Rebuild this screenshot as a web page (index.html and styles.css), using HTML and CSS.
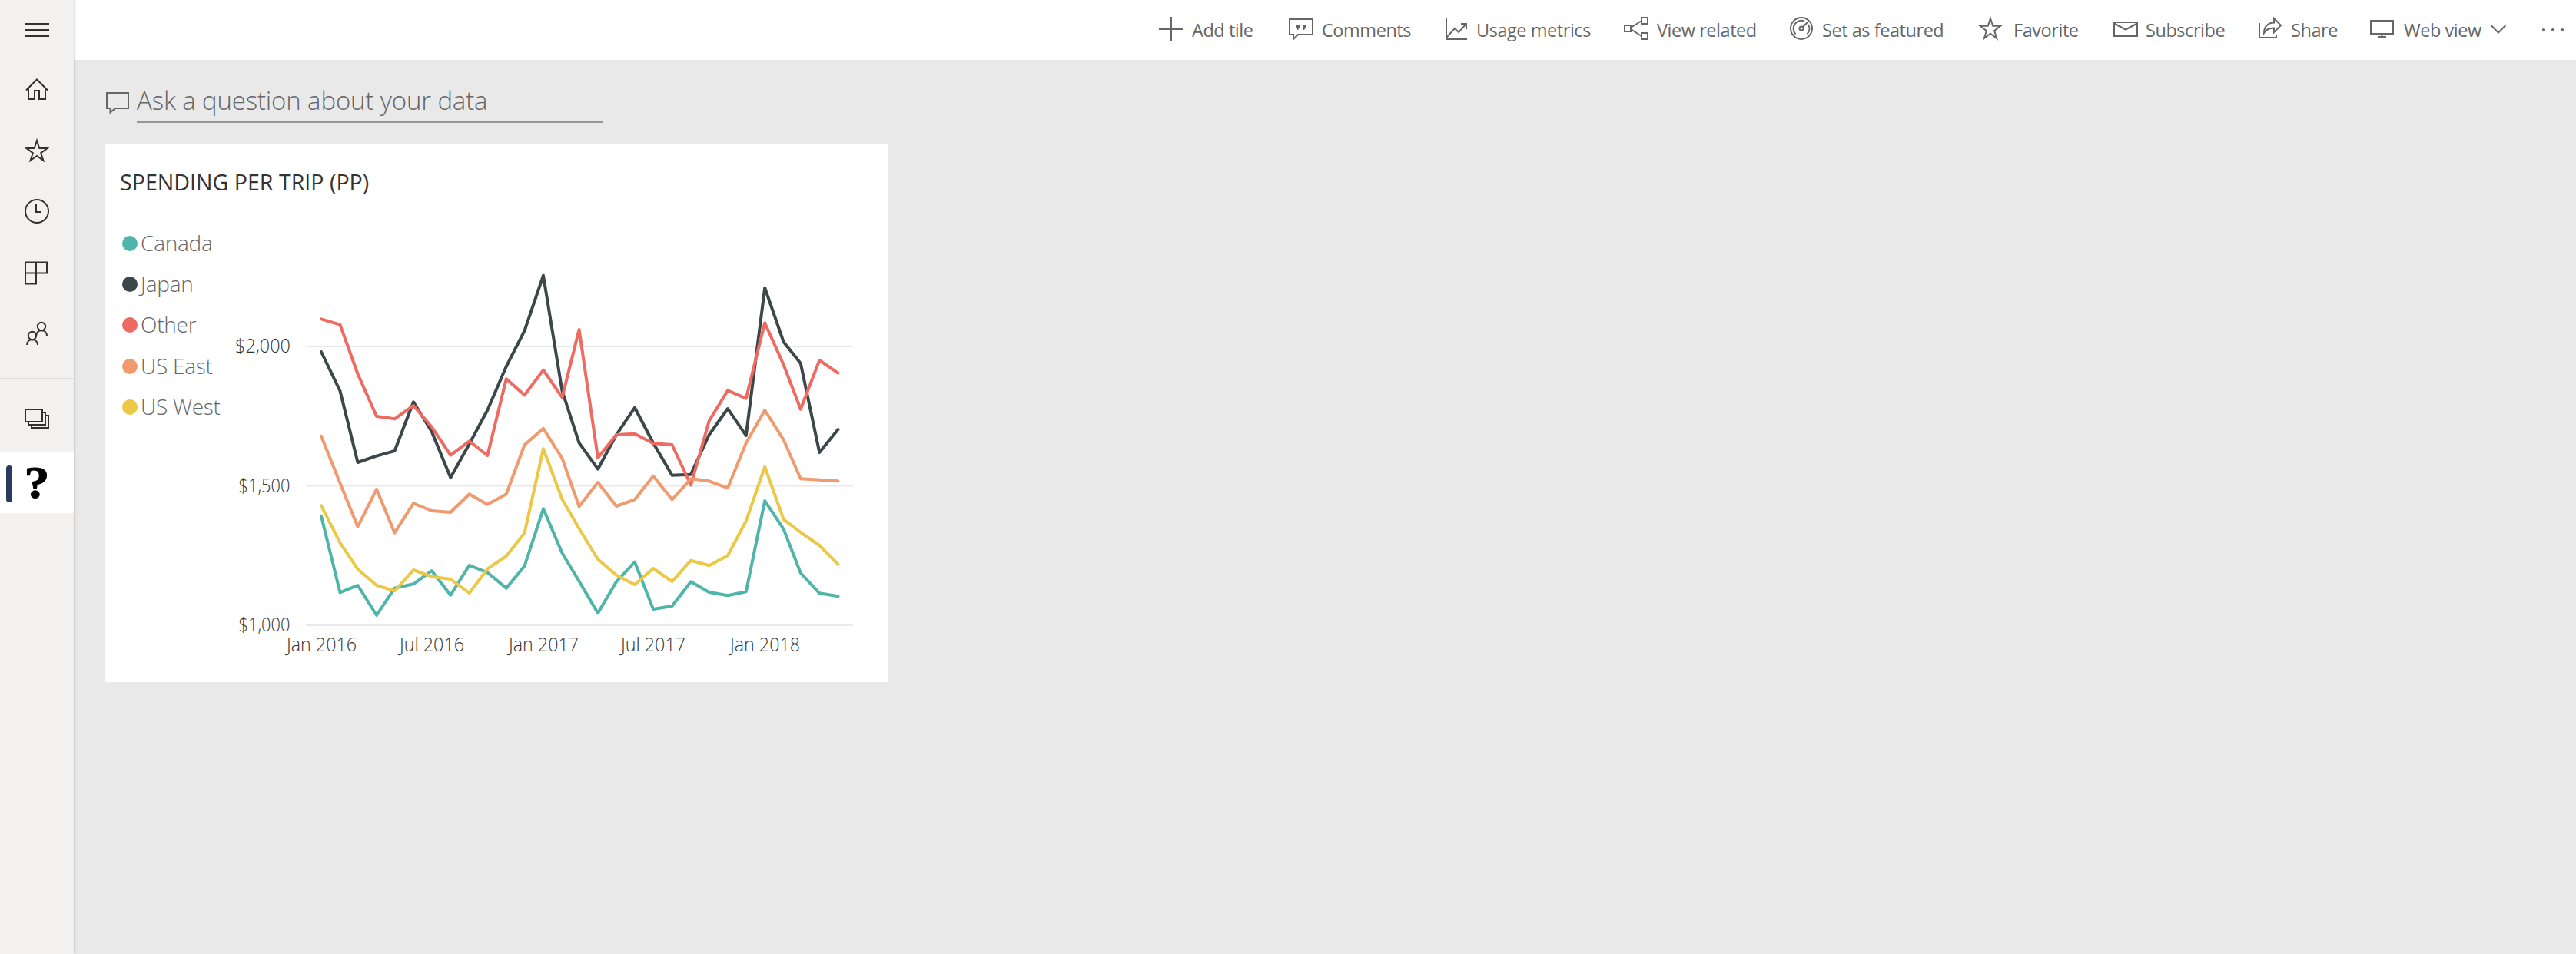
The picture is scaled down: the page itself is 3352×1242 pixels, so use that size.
FILE: index.html
```html
<!DOCTYPE html>
<html lang="en">
<head>
<meta charset="utf-8">
<title>Spending dashboard</title>
<link rel="stylesheet" href="styles.css">
</head>
<body>
<div class="app">
  <nav class="rail">
    <a class="rail-item menu"><svg width="32" height="18" viewBox="0 0 32 18"><path d="M0 1h32M0 9h32M0 17h32"/></svg></a>
    <a class="rail-item"><svg width="32" height="32" viewBox="0 0 32 32"><path d="M2 17.500L16 3.500 30 17.500M5 15v14h8V18h6v11h8V15"/></svg></a>
    <a class="rail-item"><svg width="32" height="32" viewBox="0 0 32 32"><path d="M16 3l3.200 10H29.500l-8.300 6.200 3.200 9.800L16 23l-8.400 6 3.200-9.800L2.500 13h10.300z"/></svg></a>
    <a class="rail-item"><svg width="32" height="32" viewBox="0 0 32 32"><circle cx="16" cy="16" r="15"/><path d="M15 6v11h7"/></svg></a>
    <a class="rail-item"><svg width="32" height="32" viewBox="0 0 32 32"><path d="M1 2.500h28v14H15v14H1zM15 2.500v14M1 16.500h14"/></svg></a>
    <a class="rail-item"><svg width="32" height="32" viewBox="0 0 32 32"><circle cx="22" cy="7" r="5.200"/><circle cx="10" cy="19" r="5.200"/><path d="M15 19c.5-4 3-6.800 7-6.800 4.500 0 7 3 7 6.800M3 31c0-4 2.500-6.800 7-6.800s7 2.800 7 6.800"/></svg></a>
    <span class="rail-divider"></span>
    <a class="rail-item stack"><svg width="32" height="26" viewBox="0 0 32 26"><path d="M1 1h22v16H1zM23 5h4v16H5v-4M27 9h4v16H9v-4"/></svg></a>
    <a class="rail-item current"><span class="marker"></span><span class="question">?</span></a>
  </nav>
  <div class="main">
    <header class="toolbar">
      <a class="action add"><svg width="34" height="34" viewBox="0 0 34 34"><path d="M1 17h32M17 1v32"/></svg><span>Add tile</span></a>
      <a class="action comments"><svg width="34" height="34" viewBox="0 0 34 34"><path d="M2 4h30v20H13l-6 6v-6H2z"/><path class="solid" d="M11 11h4v4l-2 3h-1v-2h-1zM19 11h4v4l-2 3h-1v-2h-1z"/></svg><span>Comments</span></a>
      <a class="action usage"><svg width="34" height="34" viewBox="0 0 34 34"><path d="M4 3v27h27M4 28l11-12 5 5L30 10M23 10h7v7"/></svg><span>Usage metrics</span></a>
      <a class="action related"><svg width="34" height="34" viewBox="0 0 34 34"><path d="M2 12h8v8H2zM24 2h8v8h-8zM24 22h8v8h-8zM10 15l14-9M10 17l14 9"/></svg><span>View related</span></a>
      <a class="action featured"><svg width="34" height="34" viewBox="0 0 34 34"><circle cx="17" cy="16" r="14"/><path d="M9.500 23.500A10.500 10.500 0 0 1 21 6.500M26 11a10.500 10.500 0 0 1-1.500 12.500M19 14l6-6"/><circle cx="17" cy="16" r="2.500"/></svg><span>Set as featured</span></a>
      <a class="action favorite"><svg width="34" height="34" viewBox="0 0 34 34"><path d="M17 3l3.200 9.800h10l-8.100 6.400L25.200 29 17 22.800 8.800 29l3.100-9.800-8.100-6.400h10z"/></svg><span>Favorite</span></a>
      <a class="action subscribe"><svg width="34" height="34" viewBox="0 0 34 34"><path d="M2 8h30v18H2zM2 9.500l15 8 15-8"/></svg><span>Subscribe</span></a>
      <a class="action share"><svg width="34" height="34" viewBox="0 0 34 34"><path d="M3 9v19h22v-4M22 3l9 9-9 9v-5.500c-6 0-10 1.500-13 6.500 0-8 5-13.500 13-13.500z"/></svg><span>Share</span></a>
      <a class="action webview"><svg width="34" height="34" viewBox="0 0 34 34"><path d="M2 6h29v17H2zM16.500 23v4M11 27h11"/></svg><span>Web view</span><svg class="chevron" width="22" height="14" viewBox="0 0 22 14"><path d="M1.500 2L11 11.500 20.500 2"/></svg></a>
      <a class="more"><svg width="30" height="6" viewBox="0 0 30 6"><circle class="solid" cx="3" cy="3" r="2.100"/><circle class="solid" cx="15" cy="3" r="2.100"/><circle class="solid" cx="27" cy="3" r="2.100"/></svg></a>
    </header>
    <main class="canvas">
      <div class="ask">
        <svg width="32" height="30" viewBox="0 0 32 30"><path d="M3 2h28v20H14l-6.500 5.500V22H3z"/></svg>
        <div class="ask-input"><span>Ask a question about your data</span></div>
      </div>
      <section class="tile">
        <h2>SPENDING PER TRIP (PP)</h2>
        <div class="tile-body">
          <ul class="legend">
            <li><i class="dot canada"></i><span>Canada</span></li>
            <li><i class="dot japan"></i><span>Japan</span></li>
            <li><i class="dot other"></i><span>Other</span></li>
            <li><i class="dot east"></i><span>US East</span></li>
            <li><i class="dot west"></i><span>US West</span></li>
          </ul>
          <svg class="chart" width="866" height="598" viewBox="290 290 866 598">
            <path class="grid" d="M398 451h712M398 632.500h712M398 814h712"/>
            <g class="axis">
              <text x="306" y="459" textLength="72" lengthAdjust="spacingAndGlyphs">$2,000</text>
              <text x="310.500" y="641" textLength="67" lengthAdjust="spacingAndGlyphs">$1,500</text>
              <text x="310.500" y="822" textLength="67" lengthAdjust="spacingAndGlyphs">$1,000</text>
              <text x="373" y="848" textLength="91" lengthAdjust="spacingAndGlyphs">Jan 2016</text>
              <text x="520" y="848" textLength="84" lengthAdjust="spacingAndGlyphs">Jul 2016</text>
              <text x="662" y="848" textLength="91" lengthAdjust="spacingAndGlyphs">Jan 2017</text>
              <text x="808" y="848" textLength="84" lengthAdjust="spacingAndGlyphs">Jul 2017</text>
              <text x="950" y="848" textLength="91" lengthAdjust="spacingAndGlyphs">Jan 2018</text>
            </g>
            <polyline class="line canada" points="418,671.700 442.500,771.300 465.500,762 490,801 513.500,765.700 538,760.300 561.700,743 586.300,774.700 610.700,736 634.300,745.300 658.800,765.700 682.500,737 707,662.300 731.500,720 753.600,756.700 778,798.300 802,757.300 826,731.700 850,793 874.500,789 899,757.300 922.700,771 947,775.300 970.800,770.300 995.200,652 1019.700,689 1041.800,746 1066.300,772.300 1090.500,776.300"/>
            <polyline class="line japan" points="418,458 442.500,509 465.500,602 490,593.700 513.500,587 538,523.300 561.700,561.700 586.300,621.700 610.700,578 634.300,534 658.800,477 682.500,430.700 707,358.700 731.500,509 753.600,576.700 778,610.700 802,566 826,530.700 850,576.700 874.500,618.700 899,617.700 922.700,566 947,532 970.800,567 995.200,374.700 1019.700,445.300 1041.800,473 1066.300,589 1090.500,559"/>
            <polyline class="line other" points="418,415.300 442.500,422.700 465.500,486.700 490,542 513.500,545.300 538,528 561.700,555.700 586.300,592.700 610.700,574.300 634.300,593 658.800,493.300 682.500,514.300 707,481.700 731.500,517.300 753.600,429 778,596 802,566 826,564.700 850,577.300 874.500,579 899,631.500 922.700,548 947,508.300 970.800,518.700 995.200,420.300 1019.700,475 1041.800,532.700 1066.300,469 1090.500,485.700"/>
            <polyline class="line east" points="418,567.700 442.500,629 465.500,685.700 490,637 513.500,693.700 538,655.300 561.700,665 586.300,667 610.700,643.300 634.300,656.700 658.800,643.300 682.500,579.300 707,557.700 731.500,596.700 753.600,659.300 778,628 802,659 826,650.300 850,619.700 874.500,650.300 899,623.300 922.700,626.300 947,635.300 970.800,576.700 995.200,534 1019.700,572.700 1041.800,623.300 1066.300,624.700 1090.500,626.300"/>
            <polyline class="line west" points="418,658.300 442.500,706.700 465.500,741 490,762 513.500,769.300 538,742 561.700,750.700 586.300,754 610.700,772 634.300,740.700 658.800,724 682.500,694 707,584.300 731.500,650 753.600,688.300 778,728 802,748.700 826,761 850,740 874.500,757 899,729.700 922.700,736.300 947,723.300 970.800,678.300 995.200,607.700 1019.700,676.300 1041.800,693 1066.300,710 1090.500,734.700"/>
          </svg>
        </div>
      </section>
    </main>
  </div>
</div>
</body>
</html>
```
FILE: styles.css
```css
* { box-sizing: border-box; }
body { margin: 0; background: #e9e9e9; font-family: "Open Sans", "Noto Sans", sans-serif; }
svg { display: block; flex: none; fill: none; }
.app { display: flex; width: 3352px; height: 1242px; }

.rail { display: flex; flex-direction: column; width: 96px; flex: none; background: #f2f1ef; box-shadow: 1px 0 3px rgba(0,0,0,.16); z-index: 1; }
.rail-item { display: flex; align-items: center; justify-content: center; height: 79.500px; padding-bottom: 3px; }
.rail-item svg { stroke: #323130; stroke-width: 2; }
.rail-item.menu { height: 78px; padding-bottom: 0; }
.rail-divider { height: 2px; margin-top: 16.500px; background: #dfdedc; }
.rail-item.stack { height: 94px; padding: 8px 0 0; }
.rail-item.current { height: 80px; padding: 0; background: #fff; justify-content: flex-start; }
.marker { width: 8px; height: 48px; margin: 4px 18px 0 8px; border-radius: 4px; background: #283a5e; }
.question { font: bold 60px/80px "Liberation Serif", serif; color: #000; -webkit-text-stroke: 1px #000; transform: scaleX(1.1); margin-top: -1px; margin-left: -1px; }

.main { flex: 1; display: flex; flex-direction: column; }
.toolbar { display: flex; height: 78px; background: #fff; color: #666; font-size: 23.500px; letter-spacing: -.45px; }
.toolbar svg { stroke: #666; stroke-width: 2; }
.action { display: flex; align-items: center; gap: 10px; flex: none; white-space: nowrap; padding-bottom: 2px; }
.action span { padding-top: 2px; }
.solid { fill: #666; stroke: none; }
.add { margin-left: 1411px; width: 169px; }
.comments { width: 202px; }
.usage { width: 234px; gap: 9px; }
.related { width: 215px; }
.featured { width: 246px; gap: 10px; }
.favorite { width: 176px; gap: 13px; }
.subscribe { width: 188px; gap: 9px; }
.share { width: 146px; gap: 10px; }
.webview { width: 224px; gap: 11px; }
.more { display: flex; align-items: center; }

.canvas { padding: 34px 0 0 40px; }
.ask { display: flex; height: 76px; }
.ask svg { margin-top: 7px; stroke: #666; stroke-width: 2; }
.ask-input { width: 606px; height: 48px; margin-left: 10px; border-bottom: 2px solid #979797; color: #666; font-size: 33px; font-weight: 300; line-height: 37px; letter-spacing: -.15px; white-space: nowrap; }
.tile { width: 1020px; height: 700px; background: #fff; overflow: hidden; }
.tile h2 { margin: 0; padding: 30px 0 0 20px; height: 102px; font-size: 28.600px; font-weight: 400; line-height: 38px; color: #333; }
.tile-body { display: flex; }
.legend { width: 154px; flex: none; margin: 0; padding: 0 0 0 23px; list-style: none; font-size: 28px; font-weight: 300; letter-spacing: -.25px; color: #666; white-space: nowrap; }
.legend li { display: flex; align-items: center; gap: 4px; height: 53.300px; line-height: 53px; }
.legend span { margin-top: -1px; }
.dot { width: 20px; height: 20px; border-radius: 50%; }
i.canada { background: #50b5a9; } i.japan { background: #3b4749; } i.other { background: #ed6b62; } i.east { background: #ef9a6f; } i.west { background: #ebc846; }
.grid { stroke: #e9e9e9; stroke-width: 2; }
.axis { fill: #333; font-size: 26px; font-weight: 300; }
.line { stroke-width: 4; stroke-linejoin: round; stroke-linecap: round; }
.line.canada { stroke: #50b5a9; } .line.japan { stroke: #3b4749; } .line.other { stroke: #ed6b62; } .line.east { stroke: #ef9a6f; } .line.west { stroke: #ebc846; }
```
